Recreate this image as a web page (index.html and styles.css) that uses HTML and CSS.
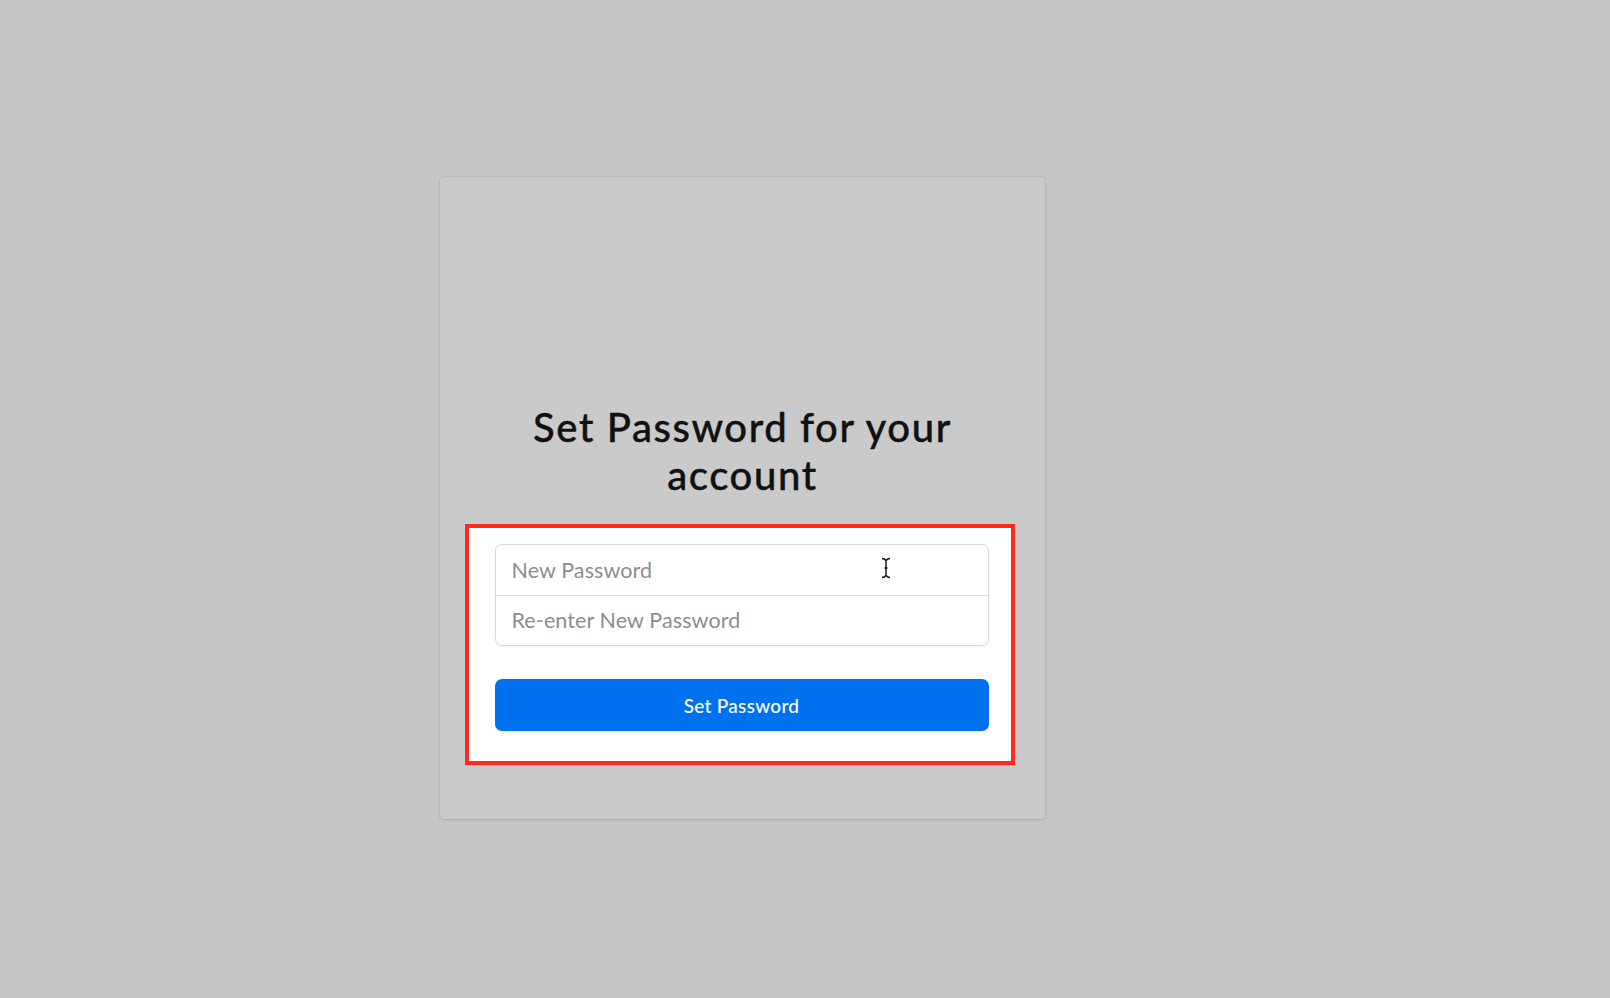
FILE: index.html
```html
<!DOCTYPE html>
<html lang="en">
<head>
<meta charset="utf-8">
<title>Set Password</title>
<link rel="stylesheet" href="styles.css">
</head>
<body>
<main class="page">
  <section class="card">
    <div class="logo-space"></div>
    <h1 class="title">Set Password for your account</h1>
    <form class="form-box">
      <div class="input-group">
        <div class="field">
          <input class="input" type="password" placeholder="New Password">
          <svg class="ibeam" width="10" height="22" viewBox="0 0 10 22" aria-hidden="true">
            <path d="M1 1.5 Q3.5 1.5 5 3.5 Q6.5 1.5 9 1.5 M5 3.5 V18.5 M1 20.5 Q3.5 20.5 5 18.5 Q6.5 20.5 9 20.5 M3.5 11 H6.5" fill="none" stroke="#111" stroke-width="1.4"/>
          </svg>
        </div>
        <div class="field">
          <input class="input" type="password" placeholder="Re-enter New Password">
        </div>
      </div>
      <button class="btn" type="button">Set Password</button>
    </form>
  </section>
</main>
</body>
</html>
```

FILE: styles.css
```css
* { box-sizing: border-box; }
html, body { margin: 0; padding: 0; }
body {
  background: #c6c6c6;
  font-family: "Lato", "Noto Sans", sans-serif;
  width: 1610px;
  height: 998px;
  overflow: hidden;
}
.page {
  padding: 177px 0 0 440px;
}
.card {
  width: 605px;
  height: 642px;
  background: #cacaca;
  border-radius: 4px;
  box-shadow: 0 0 0 1px rgba(0,0,0,0.035), 0 1px 3px rgba(0,0,0,0.12);
  display: flex;
  flex-direction: column;
  align-items: center;
}
.logo-space {
  height: 226px;
  flex: none;
}
.title {
  margin: 0 0 25px;
  width: 490px;
  text-align: center;
  font-size: 40px;
  line-height: 48px;
  font-weight: 500;
  color: #111;
  letter-spacing: 1.6px;
  -webkit-text-stroke: 0.4px #111;
}
.form-box {
  width: 550px;
  margin-left: -6px;
  background: #fff;
  border: 4px solid #ff2a1f;
  padding: 16px 22px 30px 26px;
  display: flex;
  flex-direction: column;
  gap: 33px;
}
.input-group {
  border: 1px solid #d8d8d8;
  border-radius: 7px;
  box-shadow: 0 1px 2px rgba(0,0,0,0.06);
  display: flex;
  flex-direction: column;
}
.field {
  position: relative;
  height: 50px;
}
.field + .field {
  border-top: 1px solid #dcdcdc;
}
.input {
  width: 100%;
  height: 100%;
  border: 0;
  background: transparent;
  padding: 0 16px 1px;
  font-family: "Lato", "Noto Sans", sans-serif;
  font-size: 21.5px;
  letter-spacing: 0.1px;
  color: #333;
  outline: none;
}
.input::placeholder { color: #8b8d93; }
.ibeam {
  position: absolute;
  left: 385px;
  top: 12px;
}
.btn {
  height: 52px;
  border: 0;
  border-radius: 7px;
  background: #0071ee;
  color: #fff;
  font-family: "Lato", "Noto Sans", sans-serif;
  font-size: 19px;
  font-weight: 500;
  letter-spacing: 0.3px;
  cursor: pointer;
}
```
